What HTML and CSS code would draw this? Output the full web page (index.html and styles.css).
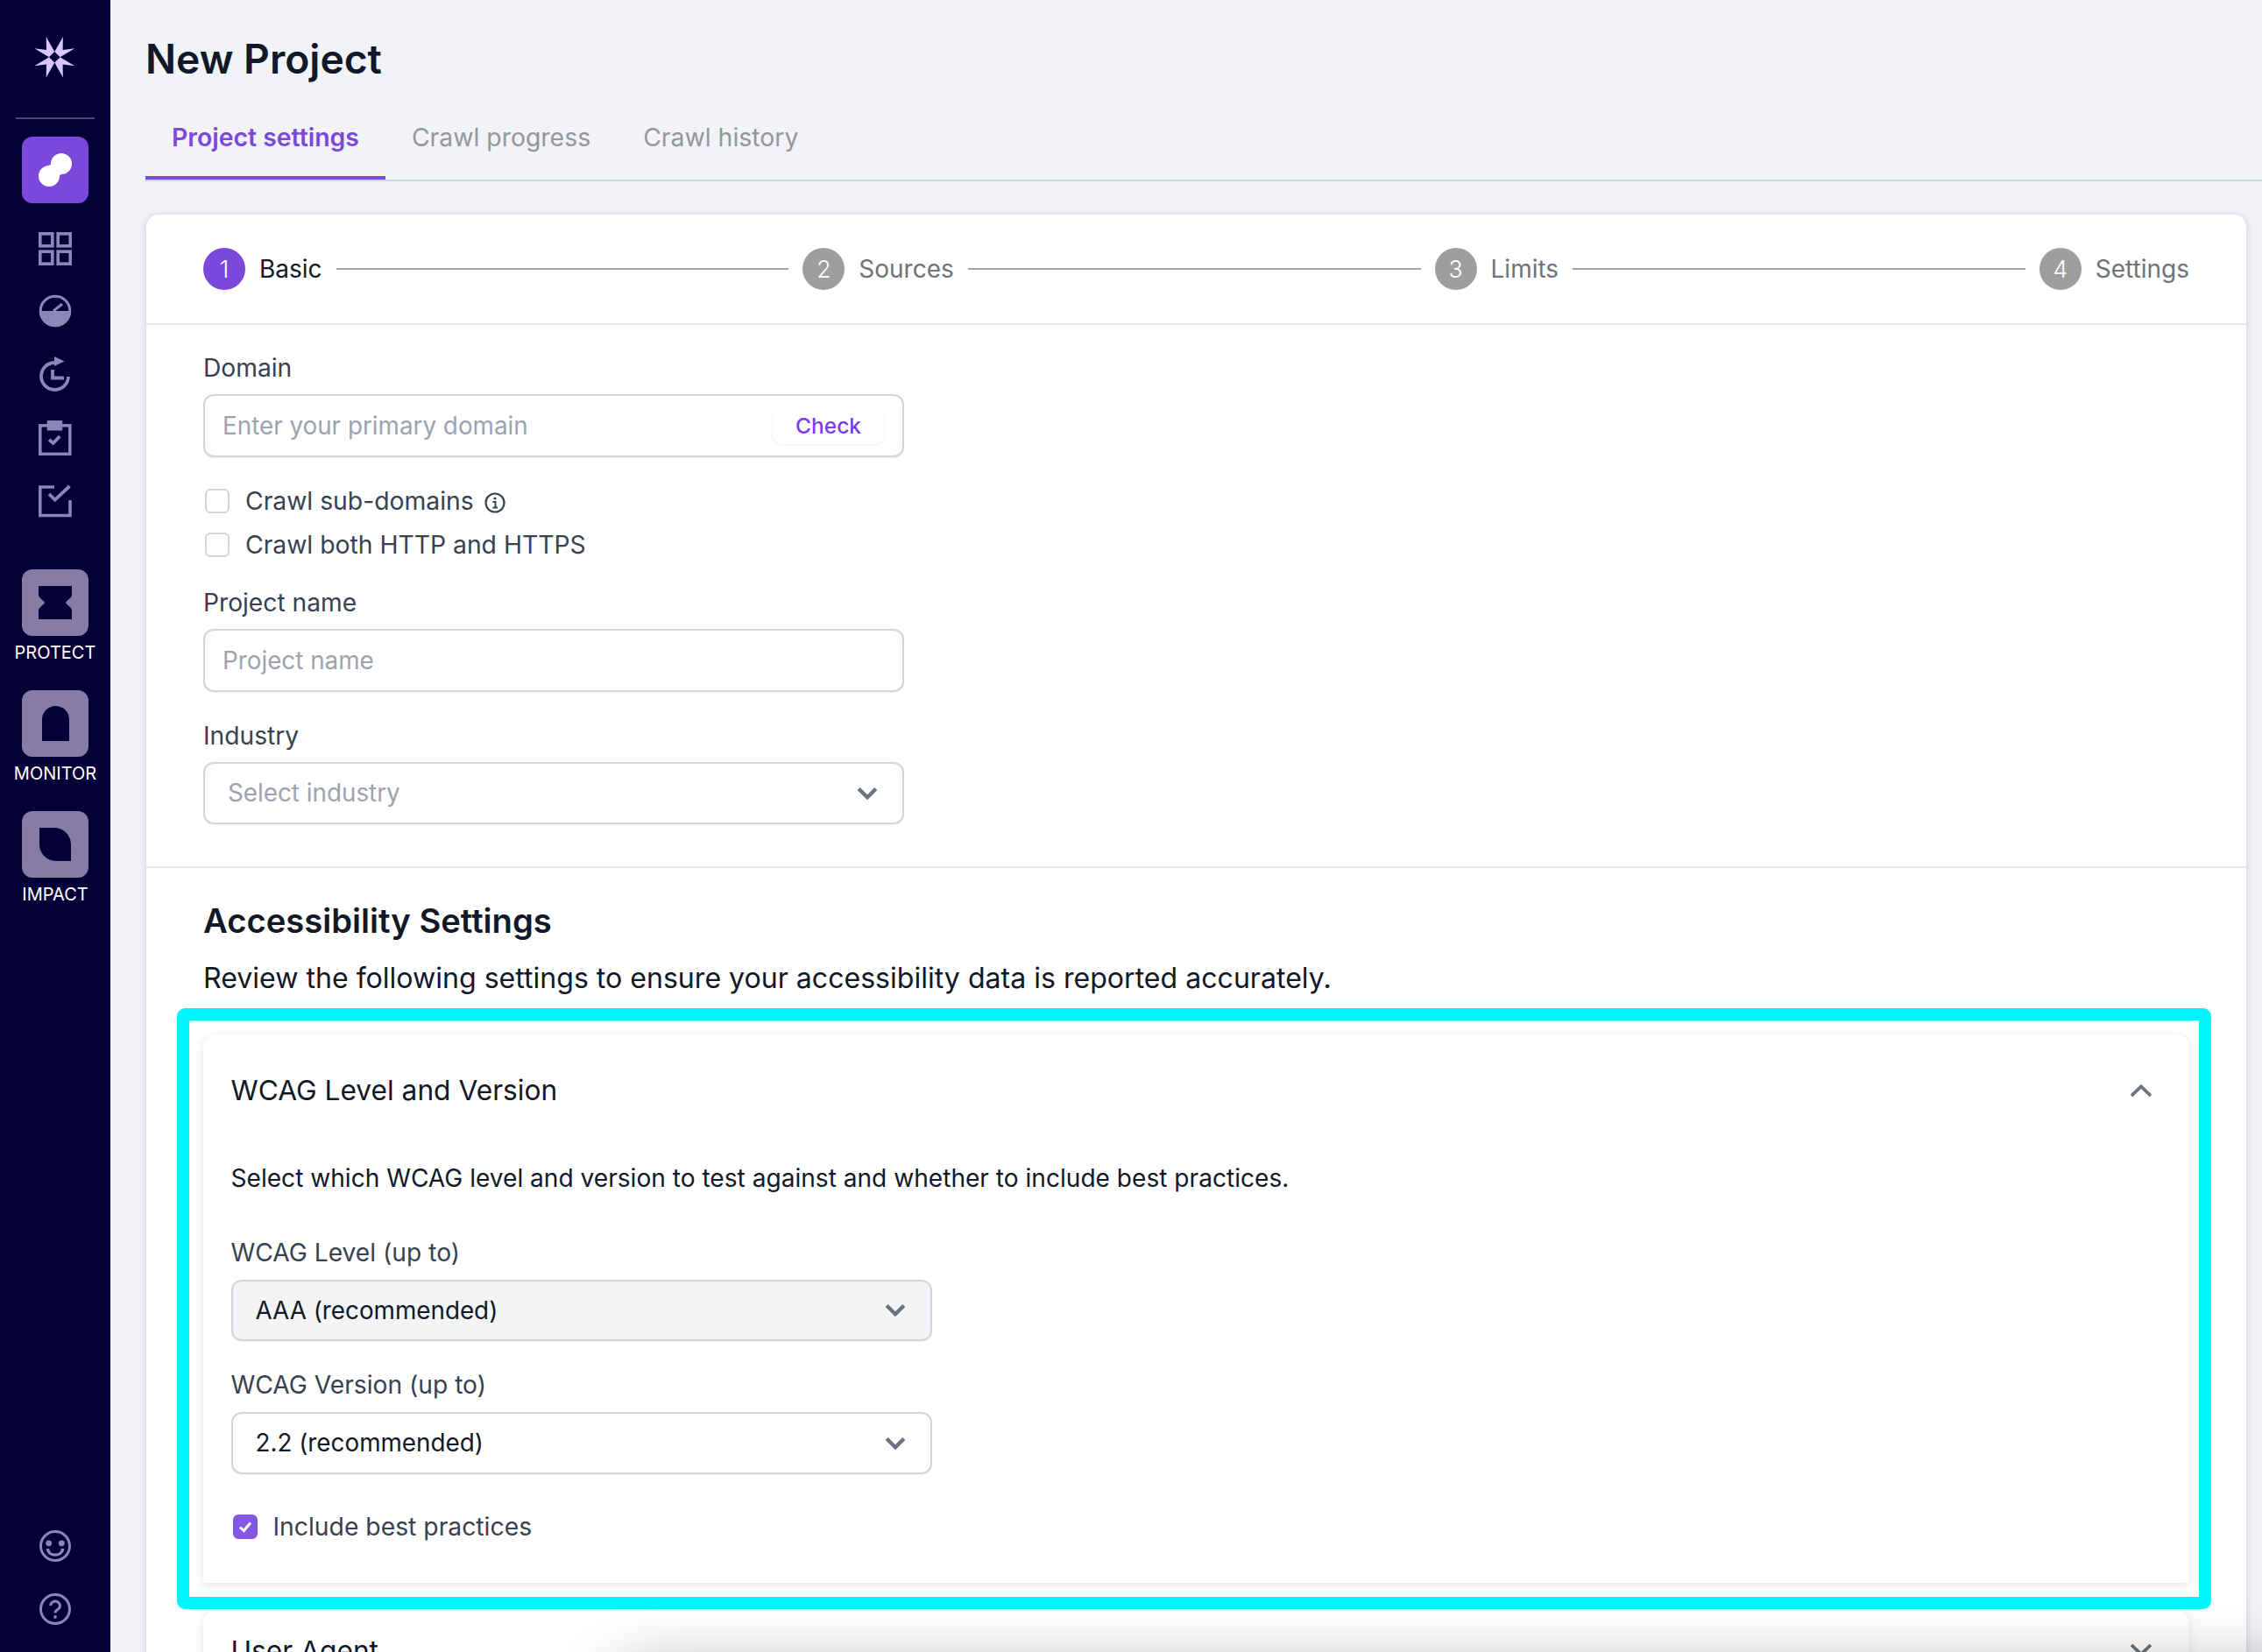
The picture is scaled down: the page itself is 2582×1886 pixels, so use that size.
FILE: index.html
```html
<!DOCTYPE html>
<html lang="en">
<head>
<meta charset="utf-8">
<title>New Project</title>
<link rel="stylesheet" href="styles.css">
</head>
<body>
<div class="app">
  <aside class="sidebar">
    <svg class="logo" width="66" height="60" viewBox="0 0 66 60" fill="#d9c6ff">
      <path d="M22.700 6 32.300 23 26 29.300 9.300 19.300 23 21Z"/>
      <path d="M41.900 6 32.300 23 38.600 29.300 55.300 19.300 41.600 21Z"/>
      <path d="M22.700 52.600 32.300 35.600 26 29.300 9.300 39.300 23 37.600Z"/>
      <path d="M41.900 52.600 32.300 35.600 38.600 29.300 55.300 39.300 41.600 37.600Z"/>
    </svg>
    <div class="side-rule"></div>
    <a class="tile tile-active">
      <svg width="38" height="38" viewBox="0 0 38 38" fill="#fff"><circle cx="12" cy="26" r="12"/><circle cx="26" cy="12" r="12"/><path d="M10 14.200Q15 14 14.200 10L28 23.800Q23 24 23.800 28Z"/></svg>
    </a>
    <nav class="side-nav">
      <svg width="38" height="38" viewBox="0 0 38 38" fill="none" stroke="#8b87b7" stroke-width="3.600"><rect x="1.800" y="1.800" width="14" height="14"/><rect x="22.200" y="1.800" width="14" height="14"/><rect x="1.800" y="22.200" width="14" height="14"/><rect x="22.200" y="22.200" width="14" height="14"/></svg>
      <svg width="38" height="38" viewBox="0 0 38 38" fill="none" stroke="#8b87b7"><circle cx="19" cy="19" r="16.800" stroke-width="3"/><path d="M1 19A18 18 0 0 0 37 19Z" fill="#8b87b7" stroke="none"/><path d="M17 19 27 11" stroke-width="3"/></svg>
      <svg width="38" height="40" viewBox="0 0 38 40" fill="none" stroke="#8b87b7" stroke-width="3.800"><path d="M18 7A15.500 15.500 0 1 0 34 23"/><path d="M16 15V24.500H29"/><path d="M18 0 29.500 5.500 18 11Z" fill="#8b87b7" stroke="none"/></svg>
      <svg width="38" height="40" viewBox="0 0 38 40" fill="none" stroke="#8b87b7" stroke-width="3.500"><rect x="1.800" y="5.800" width="34" height="32.500"/><rect x="11.500" y="1.800" width="14" height="8" fill="#8b87b7"/><path d="M12 22 16.700 26 24.300 18" stroke-width="3.800"/></svg>
      <svg width="38" height="38" viewBox="0 0 38 38" fill="none" stroke="#8b87b7" stroke-width="3.500"><path d="M18 3H1.800V35.500H36V18"/><path d="M12 11 18.700 17.700 35.500 2" stroke-width="3.800"/></svg>
    </nav>
    <a class="module">
      <span class="tile tile-mod"><svg width="38" height="38" viewBox="0 0 38 38" fill="#030038"><path d="M0 0H38V10C38 14 32 16 31 19 32 22 38 24 38 28V38H0V28C0 24 6 22 7 19 6 16 0 14 0 10Z"/></svg></span>
      <span class="module-label">PROTECT</span>
    </a>
    <a class="module">
      <span class="tile tile-mod"><svg width="31" height="40" viewBox="0 0 31 40" fill="#030038"><path d="M0 40V15.500A15.500 15.500 0 0 1 31 15.500V40Z"/></svg></span>
      <span class="module-label">MONITOR</span>
    </a>
    <a class="module">
      <span class="tile tile-mod"><svg width="36" height="38" viewBox="0 0 36 38" fill="#030038"><path d="M0 0H17A19 19 0 0 1 36 19V38H19A19 19 0 0 1 0 19Z"/></svg></span>
      <span class="module-label">IMPACT</span>
    </a>
    <div class="side-bottom">
      <svg width="36" height="36" viewBox="0 0 36 36" fill="none" stroke="#8b87b7" stroke-width="3"><circle cx="18" cy="18" r="16.500"/><circle cx="10.700" cy="14.800" r="3.400" fill="#8b87b7" stroke="none"/><circle cx="25.300" cy="14.800" r="3.400" fill="#8b87b7" stroke="none"/><path d="M9.500 21C10 30.500 26 30.500 26.500 21" stroke-width="3.400"/></svg>
      <svg width="36" height="36" viewBox="0 0 36 36" fill="none" stroke="#8b87b7" stroke-width="3"><circle cx="18" cy="18" r="16.500"/><path d="M12.800 14A5.300 5 0 1 1 21 18.300C19 19.500 18 20 18 22.500"/><circle cx="18" cy="27" r="1.900" fill="#8b87b7" stroke="none"/></svg>
    </div>
  </aside>

  <main class="main">
    <h1 class="page-title">New Project</h1>
    <div class="tabs">
      <a class="tab tab-active">Project settings</a>
      <a class="tab">Crawl progress</a>
      <a class="tab">Crawl history</a>
    </div>

    <section class="panel">
      <div class="stepper">
        <span class="step-num step-num-active">1</span><span class="step-text step-text-active">Basic</span>
        <span class="step-line"></span>
        <span class="step-num">2</span><span class="step-text">Sources</span>
        <span class="step-line"></span>
        <span class="step-num">3</span><span class="step-text">Limits</span>
        <span class="step-line"></span>
        <span class="step-num">4</span><span class="step-text">Settings</span>
      </div>

      <div class="basic-form">
        <label class="field-label">Domain</label>
        <div class="control control-input">
          <input class="bare-input" type="text" placeholder="Enter your primary domain">
          <button class="check-btn" type="button">Check</button>
        </div>
        <div class="check-row check-first">
          <span class="box"></span><span class="check-text">Crawl sub-domains</span>
          <svg class="info" width="24" height="24" viewBox="0 0 24 24" fill="none" stroke="#374151" stroke-width="2.200"><circle cx="12" cy="12" r="10.500"/><path d="M9.500 11H12.500V17.500M9.500 17.500H15" stroke-width="2"/><circle cx="12" cy="7" r="1.600" fill="#374151" stroke="none"/></svg>
        </div>
        <div class="check-row check-second">
          <span class="box"></span><span class="check-text">Crawl both HTTP and HTTPS</span>
        </div>
        <label class="field-label name-label">Project name</label>
        <div class="control control-input">
          <input class="bare-input" type="text" placeholder="Project name">
        </div>
        <label class="field-label field-gap">Industry</label>
        <div class="control control-select placeholder-select">
          <span>Select industry</span>
          <svg class="chev" width="24" height="15" viewBox="0 0 24 15" fill="none" stroke="#6b7280" stroke-width="4.400"><path d="M2.200 2.500 12 12.200 21.800 2.500"/></svg>
        </div>
      </div>

      <div class="access">
        <h2 class="access-title">Accessibility Settings</h2>
        <p class="access-intro">Review the following settings to ensure your accessibility data is reported accurately.</p>

        <div class="acc-card acc-open">
          <div class="acc-head">
            <span>WCAG Level and Version</span>
            <svg width="26" height="16" viewBox="0 0 26 16" fill="none" stroke="#6b7280" stroke-width="3.800"><path d="M2 14 13 3.500 24 14"/></svg>
          </div>
          <p class="acc-desc">Select which WCAG level and version to test against and whether to include best practices.</p>
          <label class="field-label wcag-first">WCAG Level (up to)</label>
          <div class="control control-select select-filled">
            <span>AAA (recommended)</span>
            <svg class="chev" width="24" height="15" viewBox="0 0 24 15" fill="none" stroke="#6b7280" stroke-width="4.400"><path d="M2.200 2.500 12 12.200 21.800 2.500"/></svg>
          </div>
          <label class="field-label version-label">WCAG Version (up to)</label>
          <div class="control control-select">
            <span>2.2 (recommended)</span>
            <svg class="chev" width="24" height="15" viewBox="0 0 24 15" fill="none" stroke="#6b7280" stroke-width="4.400"><path d="M2.200 2.500 12 12.200 21.800 2.500"/></svg>
          </div>
          <div class="check-row best-row">
            <span class="box box-on"><svg width="20" height="20" viewBox="0 0 20 20" fill="none" stroke="#fff" stroke-width="3"><path d="M4 10.500 8.300 14.500 16 5.500"/></svg></span>
            <span class="check-text">Include best practices</span>
          </div>
        </div>

        <div class="acc-card acc-next">
          <div class="acc-head">
            <span>User Agent</span>
            <svg width="26" height="16" viewBox="0 0 26 16" fill="none" stroke="#6b7280" stroke-width="3.800"><path d="M2 2 13 12.500 24 2"/></svg>
          </div>
        </div>
      </div>
    </section>
  </main>
</div>
<div class="edge-shade"></div>
</body>
</html>
```
FILE: styles.css
```css
* { box-sizing: border-box; }
html, body { margin: 0; height: 100%; overflow: hidden; }
body {
  font-family: Inter, "Liberation Sans", sans-serif;
  background: #f1f3f7;
  color: #111827;
}
.app { display: flex; height: 1886px; overflow: hidden; }

/* sidebar */
.sidebar {
  width: 126px;
  flex: none;
  background: #030038;
  display: flex;
  flex-direction: column;
  align-items: center;
  padding: 36px 0 31.500px;
}
.logo { display: block; }
.side-rule { width: 90px; height: 2px; background: #4b4a6e; margin-top: 37.500px; margin-bottom: 20px; }
.tile {
  width: 76px; height: 76px; border-radius: 12px;
  display: flex; align-items: center; justify-content: center; flex: none;
}
.tile-active { background: #7c48dc; }
.tile-mod { background: #877ca3; }
.side-nav { display: flex; flex-direction: column; align-items: center; gap: 33px; margin-top: 33px; margin-bottom: 59px; }
.side-nav svg { display: block; }
.module { display: flex; flex-direction: column; align-items: center; margin-bottom: 25px; }
.module-label { color: #fff; font-size: 20px; line-height: 36px; margin-top: 1px; height: 36px; }
.side-bottom { margin-top: auto; display: flex; flex-direction: column; gap: 36px; }
.side-bottom svg { display: block; }

/* main */
.main { flex: 1; min-width: 0; padding: 38.500px 0 0 40px; }
.page-title { margin: 0; font-size: 46.200px; line-height: 56px; font-weight: 600; color: #111827; }
.tabs { display: flex; margin-top: 18.500px; border-bottom: 2px solid #cdd3dc; }
.tab {
  padding: 0 30px; line-height: 88px; height: 92px;
  border-bottom: 4px solid transparent;
  font-size: 28.400px; font-weight: 400; color: #94979d;
}
.tab-active { color: #7c48dc; font-weight: 600; border-bottom-color: #7c48dc; }

.panel {
  margin: 38px 18px 0 1px;
  background: #fff;
  border-radius: 14px 14px 0 0;
  box-shadow: 0 1px 9px rgba(17, 24, 39, .18);
  height: 1700px;
}
.stepper {
  height: 126px;
  padding: 0 65px;
  border-bottom: 2px solid #e5e7eb;
  display: flex;
  align-items: center;
}
.step-num {
  width: 48px; height: 48px; border-radius: 50%;
  background: #9e9e9e; color: #fff;
  display: flex; align-items: center; justify-content: center;
  font-size: 26.600px; font-weight: 300; flex: none;
}
.step-num-active { background: #7c48dc; }
.step-text { margin-left: 16px; font-size: 28px; color: #6f7278; flex: none; }
.step-text-active { color: #111827; }
.step-line { flex: 1; height: 2px; background: #9ca3af; margin: 0 16px; }

.basic-form { padding: 31.500px 65px 48px; border-bottom: 2px solid #e5e7eb; }
.field-label { display: block; font-size: 28.200px; line-height: 34px; color: #374151; font-weight: 400; }
.field-gap { margin-top: 32.500px; }
.name-label { margin-top: 32px; }
.control {
  width: 800px; height: 72px; margin-top: 13.500px;
  border: 2.500px solid #d1d5db;
  border-radius: 12px;
  box-shadow: 0 1px 2px rgba(0, 0, 0, .06);
  background: #fff;
  display: flex; align-items: center;
}
.control-input { padding: 0 20px; }
.bare-input {
  flex: 1; min-width: 0; border: 0; outline: 0; padding: 0; background: transparent;
  font: inherit; font-size: 27.800px; color: #111827;
}
.bare-input::placeholder { color: #9ca3af; opacity: 1; }
.check-btn {
  width: 127px; height: 42px; border: 0; border-radius: 12px;
  background: #fff; box-shadow: 0 1px 3px rgba(0, 0, 0, .07);
  font: inherit; font-size: 24.500px; font-weight: 500; color: #7c3aed;
  margin-right: 1px; padding: 0;
}
.check-row { display: flex; align-items: center; height: 34px; padding-left: 2px; }
.check-first { margin-top: 32.500px; }
.check-second { margin-top: 16px; }
.box {
  width: 28px; height: 28px; border: 2px solid #d1d5db; border-radius: 6px; flex: none;
  display: flex; align-items: center; justify-content: center;
  background: #fff;
}
.box-on { background: #8557e3; border-color: #8557e3; }
.check-text { margin-left: 18px; font-size: 28.300px; color: #374151; }
.info { margin-left: 12px; margin-top: 4px; flex: none; }
.control-select {
  height: 70.500px; padding: 0 28px 0 26px;
  justify-content: space-between;
  font-size: 27.800px; color: #111827;
}
.placeholder-select { color: #9ca3af; }
.select-filled { background: #f3f4f6; }
.chev { flex: none; }

/* accessibility */
.access { padding: 0 65px; }
.access-title { margin: 37px 0 0; font-size: 38.200px; line-height: 46px; font-weight: 600; color: #111827; }
.access-intro { margin: 26px 0 0; font-size: 32.100px; line-height: 34px; color: #111827; }
.acc-card {
  position: relative;
  background: #fff;
  border-radius: 14px 14px 0 0;
  box-shadow: 0 2px 9px rgba(17, 24, 39, .13);
  padding: 44px 31.500px 47px;
}
.acc-open { margin-top: 47px; }
.acc-open::after {
  content: "";
  position: absolute;
  top: -30px; left: -30px; right: -25px; bottom: -30px;
  border: 14px solid #00f6ff;
  border-radius: 9px;
  z-index: 3;
  pointer-events: none;
}
.acc-next { margin-top: 32px; padding-top: 25px; }
.acc-head {
  display: flex; align-items: center; justify-content: space-between;
  height: 40px; font-size: 31.700px; color: #111827; padding-right: 11px;
}
.acc-desc { margin: 63.500px 0 0; font-size: 28.100px; line-height: 34px; color: #111827; }
.wcag-first { margin-top: 50.500px; }
.acc-card .control-select { margin-top: 14px; }
.version-label { margin-top: 33px; }
.best-row { margin-top: 43.500px; }
.edge-shade {
  position: fixed;
  left: 690px; top: 1905px; width: 2200px; height: 120px;
  border-radius: 60px;
  background: #ddd;
  box-shadow: 0 0 70px 4px rgba(0, 0, 0, .3);
  z-index: 2;
}
```
